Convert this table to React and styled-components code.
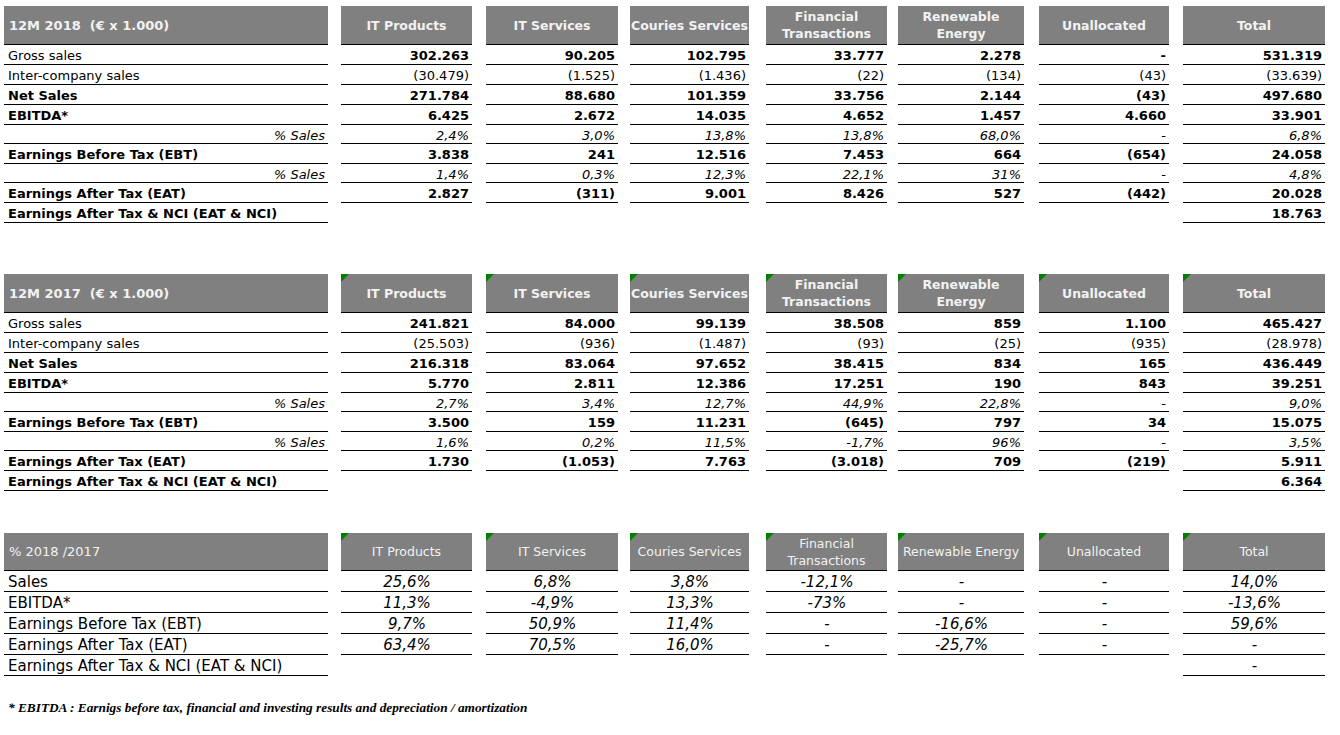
import React from "react";
import styled, { createGlobalStyle } from "styled-components";

const GlobalStyle = createGlobalStyle`
  *, *::before, *::after { box-sizing: border-box; }
  html, body { margin: 0; padding: 0; background: #fff; }
  body {
    font-family: "DejaVu Sans", Verdana, sans-serif;
    color: #000;
  }
`;

const TEMPLATE =
  "324px 13px 131px 14px 132px 12px 119px 17px 121px 11px 126px 15px 130px 14px 142px";

const Page = styled.div`
  width: 1340px;
  height: 735px;
  padding: 6px 0 0 4px;
  display: flex;
  flex-direction: column;
  overflow: hidden;
`;

const Table = styled.section`
  display: flex;
  flex-direction: column;
  margin-bottom: ${(p) => p.$gap}px;
`;

const Row = styled.div`
  display: grid;
  grid-template-columns: ${TEMPLATE};
  height: ${(p) => p.$h}px;
`;

const HeadCell = styled.div`
  grid-column: ${(p) => p.$col};
  position: relative;
  background: #808080;
  border-bottom: 1px solid #000;
  color: #f2f2f2;
  font-weight: ${(p) => (p.$bold ? 700 : 400)};
  font-size: ${(p) => p.$size}px;
  line-height: 17px;
  display: flex;
  align-items: center;
  justify-content: ${(p) => (p.$left ? "flex-start" : "center")};
  text-align: ${(p) => (p.$left ? "left" : "center")};
  padding: ${(p) => (p.$left ? "0 0 0 5px" : "0")};
  white-space: pre;
`;

const Flag = styled.span`
  position: absolute;
  top: 0;
  left: 0;
  width: 0;
  height: 0;
  border-top: 8px solid #008000;
  border-right: 8px solid transparent;
`;

const Cell = styled.div`
  grid-column: ${(p) => p.$col};
  border-bottom: ${(p) => (p.$line ? "1px solid #000" : "none")};
  display: flex;
  align-items: center;
  justify-content: ${(p) => p.$justify};
  padding: 2px 3px 0 4px;
  font-size: ${(p) => p.$size}px;
  font-weight: ${(p) => (p.$bold ? 700 : 400)};
  font-style: ${(p) => (p.$italic ? "italic" : "normal")};
  white-space: nowrap;
  line-height: 1;
`;

const Footnote = styled.p`
  margin: 24px 0 0 4px;
  font-family: "Liberation Serif", "Times New Roman", serif;
  font-weight: 700;
  font-style: italic;
  font-size: 13.3px;
  line-height: 15px;
`;

const HEADERS_BOLD = [
  "IT Products",
  "IT Services",
  "Couries Services",
  "Financial\nTransactions",
  "Renewable\nEnergy",
  "Unallocated",
  "Total",
];

const HEADERS_PLAIN = [
  "IT Products",
  "IT Services",
  "Couries Services",
  "Financial\nTransactions",
  "Renewable Energy",
  "Unallocated",
  "Total",
];

const T2018 = [
  { type: "gross", label: "Gross sales", v: ["302.263", "90.205", "102.795", "33.777", "2.278", "-", "531.319"] },
  { type: "inter", label: "Inter-company sales", v: ["(30.479)", "(1.525)", "(1.436)", "(22)", "(134)", "(43)", "(33.639)"] },
  { type: "bold", label: "Net Sales", v: ["271.784", "88.680", "101.359", "33.756", "2.144", "(43)", "497.680"] },
  { type: "bold", label: "EBITDA*", v: ["6.425", "2.672", "14.035", "4.652", "1.457", "4.660", "33.901"] },
  { type: "pct", label: "% Sales", v: ["2,4%", "3,0%", "13,8%", "13,8%", "68,0%", "-", "6,8%"] },
  { type: "bold", label: "Earnings Before Tax (EBT)", v: ["3.838", "241", "12.516", "7.453", "664", "(654)", "24.058"] },
  { type: "pct", label: "% Sales", v: ["1,4%", "0,3%", "12,3%", "22,1%", "31%", "-", "4,8%"] },
  { type: "bold", label: "Earnings After Tax (EAT)", v: ["2.827", "(311)", "9.001", "8.426", "527", "(442)", "20.028"] },
  { type: "nci", label: "Earnings After Tax & NCI (EAT & NCI)", v: [null, null, null, null, null, null, "18.763"] },
];

const T2017 = [
  { type: "gross", label: "Gross sales", v: ["241.821", "84.000", "99.139", "38.508", "859", "1.100", "465.427"] },
  { type: "inter", label: "Inter-company sales", v: ["(25.503)", "(936)", "(1.487)", "(93)", "(25)", "(935)", "(28.978)"] },
  { type: "bold", label: "Net Sales", v: ["216.318", "83.064", "97.652", "38.415", "834", "165", "436.449"] },
  { type: "bold", label: "EBITDA*", v: ["5.770", "2.811", "12.386", "17.251", "190", "843", "39.251"] },
  { type: "pct", label: "% Sales", v: ["2,7%", "3,4%", "12,7%", "44,9%", "22,8%", "-", "9,0%"] },
  { type: "bold", label: "Earnings Before Tax (EBT)", v: ["3.500", "159", "11.231", "(645)", "797", "34", "15.075"] },
  { type: "pct", label: "% Sales", v: ["1,6%", "0,2%", "11,5%", "-1,7%", "96%", "-", "3,5%"] },
  { type: "bold", label: "Earnings After Tax (EAT)", v: ["1.730", "(1.053)", "7.763", "(3.018)", "709", "(219)", "5.911"] },
  { type: "nci", label: "Earnings After Tax & NCI (EAT & NCI)", v: [null, null, null, null, null, null, "6.364"] },
];

const TDELTA = [
  { label: "Sales", v: ["25,6%", "6,8%", "3,8%", "-12,1%", "-", "-", "14,0%"] },
  { label: "EBITDA*", v: ["11,3%", "-4,9%", "13,3%", "-73%", "-", "-", "-13,6%"] },
  { label: "Earnings Before Tax (EBT)", v: ["9,7%", "50,9%", "11,4%", "-", "-16,6%", "-", "59,6%"] },
  { label: "Earnings After Tax (EAT)", v: ["63,4%", "70,5%", "16,0%", "-", "-25,7%", "-", "-"] },
  { label: "Earnings After Tax & NCI (EAT & NCI)", v: [null, null, null, null, null, null, "-"] },
];

const ROW_STYLE = {
  gross: { h: 20, labelBold: false, valBold: true, italic: false },
  inter: { h: 20, labelBold: false, valBold: false, italic: false },
  bold: { h: 20, labelBold: true, valBold: true, italic: false },
  pct: { h: 19, labelBold: false, valBold: false, italic: true },
  nci: { h: 20, labelBold: true, valBold: true, italic: false },
};

function Header({ title, headers, bold, flags, h, titleSize }) {
  return (
    <Row $h={h}>
      <HeadCell $col={1} $left $bold={bold} $size={titleSize}>
        {title}
      </HeadCell>
      {headers.map((t, i) => (
        <HeadCell key={i} $col={i * 2 + 3} $bold={bold} $size={12.5}>
          {flags && <Flag />}
          {t}
        </HeadCell>
      ))}
    </Row>
  );
}

function SegmentTable({ title, rows, flags, gap }) {
  return (
    <Table $gap={gap}>
      <Header title={title} headers={HEADERS_BOLD} bold flags={flags} h={39} titleSize={13} />
      {rows.map((r, ri) => {
        const s = ROW_STYLE[r.type];
        const isPct = r.type === "pct";
        return (
          <Row key={ri} $h={s.h}>
            <Cell
              $col={1}
              $line
              $size={13}
              $bold={s.labelBold}
              $italic={isPct}
              $justify={isPct ? "flex-end" : "flex-start"}
            >
              {r.label}
            </Cell>
            {r.v.map((val, i) => (
              <Cell
                key={i}
                $col={i * 2 + 3}
                $line={val !== null}
                $size={13}
                $bold={s.valBold}
                $italic={s.italic}
                $justify="flex-end"
              >
                {val}
              </Cell>
            ))}
          </Row>
        );
      })}
    </Table>
  );
}

function DeltaTable() {
  return (
    <Table $gap={0}>
      <Header title="% 2018 /2017" headers={HEADERS_PLAIN} flags h={38} titleSize={13} />
      {TDELTA.map((r, ri) => (
        <Row key={ri} $h={21}>
          <Cell $col={1} $line $size={15} $justify="flex-start">
            {r.label}
          </Cell>
          {r.v.map((val, i) => (
            <Cell key={i} $col={i * 2 + 3} $line={val !== null} $size={15} $italic $justify="center">
              {val}
            </Cell>
          ))}
        </Row>
      ))}
    </Table>
  );
}

export default function App() {
  return (
    <>
      <GlobalStyle />
      <Page>
        <SegmentTable title="12M 2018  (€ x 1.000)" rows={T2018} gap={51} />
        <SegmentTable title="12M 2017  (€ x 1.000)" rows={T2017} flags gap={42} />
        <DeltaTable />
        <Footnote>
          * EBITDA : Earnigs before tax, financial and investing results and depreciation / amortization
        </Footnote>
      </Page>
    </>
  );
}
